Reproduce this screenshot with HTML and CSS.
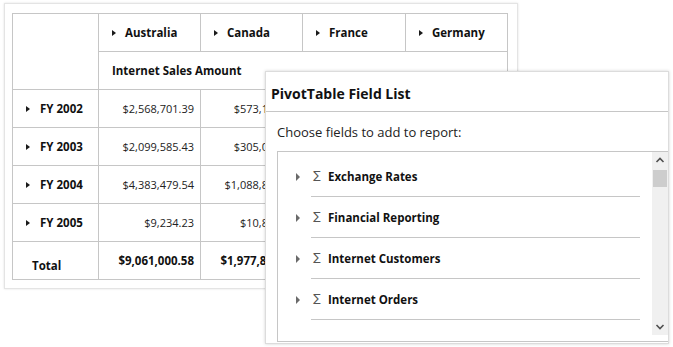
FILE: index.html
```html
<!DOCTYPE html>
<html lang="en">
<head>
    <meta charset="UTF-8">
    <title>Pivot Table</title>
    <link rel="stylesheet" href="styles.css">
</head>
<body>
    <div class="pivot-view">
        <table class="pivot-grid">
            <colgroup>
                <col class="col-rows">
                <col class="col-au">
                <col class="col-ca">
                <col class="col-fr">
                <col class="col-de">
            </colgroup>
            <tr>
                <th class="corner" rowspan="2"></th>
                <th class="col-head"><span class="caret"></span>Australia</th>
                <th class="col-head"><span class="caret"></span>Canada</th>
                <th class="col-head"><span class="caret"></span>France</th>
                <th class="col-head"><span class="caret"></span>Germany</th>
            </tr>
            <tr>
                <th class="measure" colspan="4">Internet Sales Amount</th>
            </tr>
            <tr>
                <th class="row-head"><span class="caret"></span>FY 2002</th>
                <td>$2,568,701.39</td>
                <td>$573,100.97</td>
                <td>$414,214.40</td>
                <td>$513,353.17</td>
            </tr>
            <tr>
                <th class="row-head"><span class="caret"></span>FY 2003</th>
                <td>$2,099,585.43</td>
                <td>$305,000.69</td>
                <td>$326,632.81</td>
                <td>$342,140.53</td>
            </tr>
            <tr>
                <th class="row-head"><span class="caret"></span>FY 2004</th>
                <td>$4,383,479.54</td>
                <td>$1,088,812.85</td>
                <td>$1,890,315.42</td>
                <td>$1,999,478.90</td>
            </tr>
            <tr>
                <th class="row-head"><span class="caret"></span>FY 2005</th>
                <td>$9,234.23</td>
                <td>$10,880.90</td>
                <td>$13,172.86</td>
                <td>$14,817.97</td>
            </tr>
            <tr class="total-row">
                <th class="row-head total">Total</th>
                <td>$9,061,000.58</td>
                <td>$1,977,844.86</td>
                <td>$2,644,017.71</td>
                <td>$2,894,312.34</td>
            </tr>
        </table>
    </div>

    <div class="field-list">
        <div class="field-list-title">PivotTable Field List</div>
        <div class="field-list-hint">Choose fields to add to report:</div>
        <div class="field-box">
            <div class="field-items">
                <div class="field-row">
                    <span class="field-caret"></span>
                    <div class="field-body"><span class="sigma">&sum;</span><span class="field-name">Exchange Rates</span></div>
                </div>
                <div class="field-row">
                    <span class="field-caret"></span>
                    <div class="field-body"><span class="sigma">&sum;</span><span class="field-name">Financial Reporting</span></div>
                </div>
                <div class="field-row">
                    <span class="field-caret"></span>
                    <div class="field-body"><span class="sigma">&sum;</span><span class="field-name">Internet Customers</span></div>
                </div>
                <div class="field-row">
                    <span class="field-caret"></span>
                    <div class="field-body"><span class="sigma">&sum;</span><span class="field-name">Internet Orders</span></div>
                </div>
            </div>
            <div class="scrollbar">
                <svg class="scroll-arrow" width="16" height="16" viewBox="0 0 16 16"><path d="M4.5 10 L8 6.5 L11.5 10" fill="none" stroke="#505050" stroke-width="1.6"/></svg>
                <div class="scroll-thumb"></div>
                <div class="scroll-track"></div>
                <svg class="scroll-arrow" width="16" height="16" viewBox="0 0 16 16"><path d="M4.5 6 L8 9.5 L11.5 6" fill="none" stroke="#505050" stroke-width="1.6"/></svg>
            </div>
        </div>
    </div>
</body>
</html>
```

FILE: styles.css
```css
html, body {
    margin: 0;
    padding: 0;
    background: #fff;
    font-family: "Open Sans", "Noto Sans", sans-serif;
    color: #1a1a1a;
}

body {
    width: 673px;
    height: 347px;
    position: relative;
    overflow: hidden;
}

.pivot-view {
    display: inline-block;
    margin: 3px 0 0 4px;
    padding: 9px 9px 8px 7px;
    border: 1px solid #e4e4e4;
    box-shadow: 0 0 2px rgba(0, 0, 0, .12);
}

.pivot-grid {
    border-collapse: collapse;
    table-layout: fixed;
    width: 495px;
    font-size: 11px;
}

.col-rows { width: 86px; }
.col-au { width: 102px; }
.col-ca { width: 102px; }
.col-fr { width: 103px; }
.col-de { width: 102px; }

.pivot-grid tr {
    height: 38px;
}

.pivot-grid th,
.pivot-grid td {
    border: 1px solid #c6c6c6;
    padding: 0;
    white-space: nowrap;
    overflow: hidden;
}

.pivot-grid th {
    text-align: left;
    font-weight: 700;
    font-size: 11.5px;
    color: #111;
}

.pivot-grid td {
    text-align: right;
    padding-right: 6px;
    color: #222;
}

.pivot-grid .col-head,
.pivot-grid .measure {
    padding-left: 13px;
}

.pivot-grid .row-head {
    padding-left: 13px;
}

.caret {
    display: inline-block;
    width: 0;
    height: 0;
    border-top: 3.5px solid transparent;
    border-bottom: 3.5px solid transparent;
    border-left: 4px solid #1a1a1a;
    margin-right: 9px;
    vertical-align: 1px;
}

.row-head .caret {
    margin-right: 10px;
}

.pivot-grid .row-head.total {
    padding-left: 19px;
    padding-top: 10px;
}

.total-row td {
    font-weight: 700;
    font-size: 11.5px;
    color: #111;
}

/* field list panel lies over the grid */
.field-list {
    position: absolute;
    left: 265px;
    top: 71px;
    width: 402px;
    height: 271px;
    background: #fff;
    border: 1px solid #dcdcdc;
    box-shadow: 0 0 3px rgba(0, 0, 0, .18);
    display: flex;
    flex-direction: column;
}

.field-list-title {
    height: 39px;
    line-height: 43px;
    padding-left: 5px;
    font-size: 14px;
    font-weight: 700;
    color: #111;
    border-bottom: 1px solid #c6c6c6;
}

.field-list-hint {
    height: 39px;
    line-height: 41px;
    padding-left: 11px;
    font-size: 13px;
    color: #222;
}

.field-box {
    flex: 1;
    margin: 0 0 1px 11px;
    border: 1px solid #c6c6c6;
    border-right: none;
    display: flex;
    overflow: hidden;
}

.field-items {
    flex: 1;
    padding: 4px 12px 0 18px;
}

.field-row {
    display: flex;
    align-items: center;
}

.field-caret {
    width: 0;
    height: 0;
    border-top: 4px solid transparent;
    border-bottom: 4px solid transparent;
    border-left: 4px solid #6a6a6a;
    margin-right: 11px;
}

.field-body {
    flex: 1;
    height: 40px;
    display: flex;
    align-items: center;
    border-bottom: 1px solid #c6c6c6;
}

.sigma {
    display: inline-block;
    width: 12px;
    margin-right: 5px;
    font-family: "DejaVu Sans", sans-serif;
    font-size: 11px;
    line-height: 14px;
    color: #555;
    text-align: center;
}

.field-name {
    font-size: 11.5px;
    font-weight: 700;
    color: #111;
}

.scrollbar {
    width: 16px;
    background: #f0f0f0;
    display: flex;
    flex-direction: column;
    margin-bottom: 6px;
}

.scroll-arrow {
    display: block;
}

.scroll-thumb {
    height: 17px;
    margin: 2px 1px 0;
    background: #cdcdcd;
}

.scroll-track {
    flex: 1;
}
```
